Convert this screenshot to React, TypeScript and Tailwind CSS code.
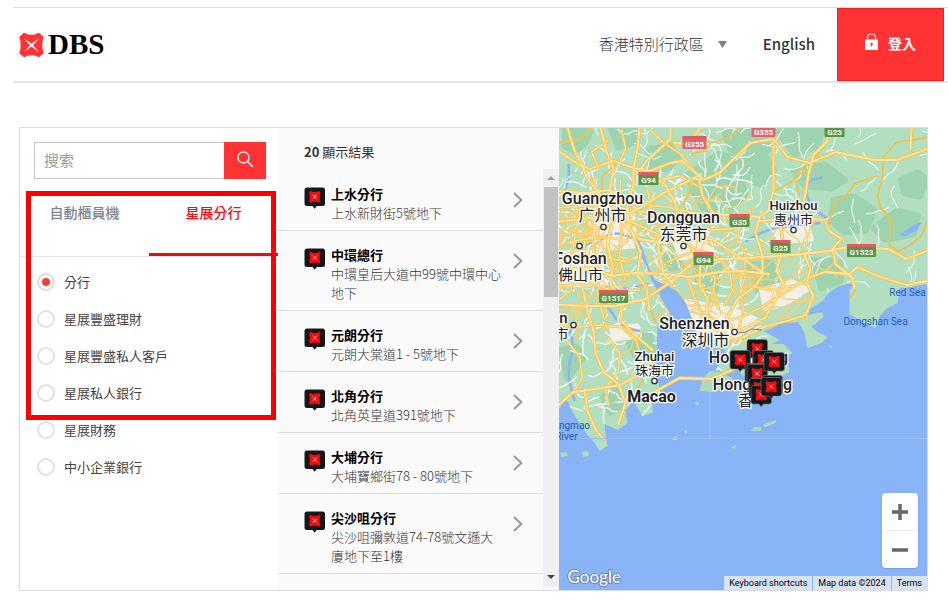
import { useState } from "react";

type Branch = { name: string; address: string };

const branches: Branch[] = [
  { name: "上水分行", address: "上水新財街5號地下" },
  { name: "中環總行", address: "中環皇后大道中99號中環中心地下" },
  { name: "元朗分行", address: "元朗大棠道1 - 5號地下" },
  { name: "北角分行", address: "北角英皇道391號地下" },
  { name: "大埔分行", address: "大埔寶鄉街78 - 80號地下" },
  { name: "尖沙咀分行", address: "尖沙咀彌敦道74-78號文遜大廈地下至1樓" },
];

const services = ["分行", "星展豐盛理財", "星展豐盛私人客戶", "星展私人銀行", "星展財務", "中小企業銀行"];

/* Brand */

function Spark({ className, color = "#ff3333" }: { className?: string; color?: string }) {
  return (
    <svg viewBox="0 0 26 26" className={className} aria-hidden="true">
      <path
        fill={color}
        d="M4.500 .8C6 .2 7 .8 8 1.500C10 2.600 16 2.600 18 1.500C19 .8 20 .2 21.500 .8C22.700 1.400 22.600 2.400 23.400 2.800C25.300 3.200 26 4.500 25.400 6C24.400 8 24.400 10 24.400 13C24.400 16 24.400 18 25.400 20C26 21.500 25.300 22.800 23.400 23.200C22.600 23.600 22.700 24.600 21.500 25.200C20 25.800 19 25.200 18 24.500C16 23.400 10 23.400 8 24.500C7 25.200 6 25.800 4.500 25.200C3.300 24.600 3.400 23.600 2.600 23.200C.7 22.800 0 21.500 .6 20C1.600 18 1.600 16 1.600 13C1.600 10 1.600 8 .6 6C0 4.500 .7 3.200 2.600 2.800C3.400 2.400 3.300 1.400 4.500 .8Z"
      />
      <path fill="#fff" d="M5 6L13 11.800L21 6L14.600 13.200L21 20.500L13 14.600L5 20.500L11.400 13.200Z" />
    </svg>
  );
}

function PinShape({ stroke = "none" }: { stroke?: string }) {
  return (
    <>
      <path
        d="M3 .5H18.500Q21 .5 21 3V16.500Q21 19 18.500 19H12.800L10.600 21.700L8.500 19H3Q.5 19 .5 16.500V3Q.5 .5 3 .5Z"
        fill="#15181b"
        stroke={stroke}
        strokeWidth="0.7"
      />
      <path
        d="M6.200 4.100Q7.200 3.600 8 4.400Q10.700 5.400 13.500 4.400Q14.400 3.600 15.400 4.200L16.500 5.500Q15.600 7.500 15.600 9.700Q15.600 12 16.500 13.900L15.400 15.300Q14.400 15.800 13.500 15Q10.700 14 8 15Q7.200 15.800 6.200 15.300L5 13.900Q5.900 12 5.900 9.700Q5.900 7.500 5 5.500Z"
        fill="#f8090e"
      />
      <path d="M8.800 7.700L12.800 11.700M12.800 7.700L8.800 11.700" stroke="#ffd9d9" strokeWidth="0.9" />
    </>
  );
}

/* Map */

const mainland =
  "M555 120H940V283L926 284L912 287L900 288L898 303L888 308L881 315L876 328L865 323L850 314L850 290L856 283L848 284L838 287L828 294L823 301L811 309L808 315L823 312L824 317L812 327L818 332L828 337L822 343L808 348L805 333L799 322L782 323L771 329L764 331L780 340L772 344L784 344L793 353L786 357L790 372L776 379L744 376L735 366L724 372L716 370L727 356L724 347L715 349L706 342L697 334L695 328L692 317L686 302L677 291L667 285L655 280L648 263L640 240L632 234L636 247L647 266L652 280L661 297L670 313L673 322L658 327L657 350L655 366L658 380L661 393L653 403L653 413L643 416L634 401L626 410L628 423L618 430L605 424L606 436L608 446L600 451L596 444L588 435L580 423L572 410L567 399L560 408L555 411Z";
const islands =
  "M700 391L703 379L710 371L720 372L733 378L728 387L714 392ZM738 381L760 380L781 383L779 396L765 399L748 393ZM763 425L770 422L777 420L776 423L766 427ZM751 431L755 427L762 427L761 431ZM582 452L588 451L590 455L584 457ZM561 453L567 452L568 456L562 457ZM685 431L688 430L687 434ZM674 437L677 436L678 440L673 440ZM732 447L737 445L735 449ZM695 403L699 402L699 406ZM828 345L832 346L833 349Z";

const hills = [
  "M566 130L590 132L587 141L576 151L566 146Z",
  "M612 129L637 130L635 142L619 147Z",
  "M650 150L670 146L678 158L668 169L651 166Z",
  "M689 175L720 154L735 160L746 195L728 212L704 208L694 192Z",
  "M726 133L760 132L770 148L752 166L737 166Z",
  "M741 156L766 157L774 170L761 184L745 177Z",
  "M779 132L822 129L818 146L795 154Z",
  "M795 171L825 165L845 180L832 188L806 186Z",
  "M835 200L855 197L874 210L866 230L845 232L832 220Z",
  "M902 180L918 173L927 180L920 196L905 193Z",
  "M875 228L898 211L918 216L914 234L885 239Z",
  "M750 265L772 263L779 285L759 291Z",
  "M815 260L840 262L841 280L822 288Z",
  "M696 265L720 262L716 289L700 287Z",
  "M562 350L577 347L583 358L568 378Z",
  "M626 337L650 336L654 354L637 357Z",
  "M604 398L617 385L624 404L611 412Z",
  "M660 246L675 250L682 266L672 268Z",
];

const urban = [
  "M590 218L632 216L634 246L600 249Z",
  "M559 253L598 252L606 283L559 285Z",
  "M674 239L705 238L714 254L682 258Z",
  "M773 225L806 222L812 239L781 242Z",
  "M612 328L638 326L640 336L614 339Z",
  "M686 301L735 310L758 320L735 338L705 336Z",
  "M762 290L793 282L808 289L789 302L766 309Z",
];

const rivers = [
  "M570 330Q576 345 571 359T575 400",
  "M596 290Q608 307 616 318T640 331",
  "M632 238Q615 229 604 238T578 244",
  "M747 241Q765 229 782 227T820 223",
  "M827 218Q809 207 807 193T822 178",
  "M569 165Q571 178 565 190",
  "M648 284Q632 290 613 289",
];

const highways = [
  "M559 151L580 165L590 169L614 161L634 168L650 171L671 163L683 161L704 180L720 173L734 159L751 143L774 139L788 157L810 163L836 152L875 160L898 160L927 149",
  "M568 128L575 151L583 165L587 177L604 199L613 220L608 244L613 267L611 284L622 301L622 321L634 334L653 350",
  "M601 128L607 151L614 169L610 190L619 211L634 223L658 234L659 249L664 274L673 283",
  "M640 128L638 150L634 168L634 185L628 206L629 225L641 252L638 276L647 288L650 310",
  "M671 128L671 139L647 161L642 168L665 184L675 201L680 219L687 240L701 262L700 285L708 298L707 324L733 339",
  "M559 222L590 218L615 221L640 208L664 193L693 179L701 174L700 182L703 196L714 214L748 216L760 217L769 210L774 190L774 145",
  "M760 217L756 233L763 256L763 275L756 286L738 299L727 318L735 333",
  "M559 270L592 268L612 276L635 273L667 274L690 277L720 272L742 271L769 274",
  "M559 305L590 306L616 306L646 299L670 283L693 263L722 259L749 258L779 256L803 254L829 251L848 247L889 249L907 259L927 251",
  "M829 128L828 141L814 155L809 174L806 194L800 217L783 219L760 221",
  "M798 218L825 220L830 231L842 239L833 249L836 264L853 278L855 288",
  "M559 405L574 392L589 390L621 385L640 374L653 361",
  "M585 242L584 266L583 288L588 311L594 331L596 353L604 372L619 384L626 403L619 424",
  "M604 199L617 216L640 239L664 243L680 240L713 239L729 250L748 262L764 273",
  "M700 128L690 144L674 143M912 128L911 149M780 221L783 239L781 256L777 271L784 284L774 303L765 318L740 331",
  "M655 392L680 378L712 379L737 368L757 355",
  "M805 255L811 269L807 282L814 296L806 315L791 320L767 326L744 337L735 341",
  "M809 278L825 272L850 274L858 267L881 277L907 285L927 281",
  "M559 191L587 193L610 190L631 202L638 210",
  "M585 389L588 411L597 431L604 439",
];

const arterials = [
  "M559 245L580 240L608 237L628 241M572 190L578 214L575 240L570 268L572 290L559 300",
  "M594 178L596 205L592 228L594 250L600 275L598 297L605 320",
  "M559 208L583 206L604 211L622 208L642 212L664 213M621 180L620 202L622 230L620 258L626 280",
  "M559 258L586 255L606 258L630 262M559 286L590 283L615 291L640 290",
  "M559 324L577 327L600 325L622 327L637 341L642 361L632 375",
  "M648 190L652 210L662 226L676 232L694 228L716 230L741 228",
  "M668 262L684 255L700 250L716 255L730 270L733 290L725 305",
  "M688 278L694 296L703 314L722 322L742 317L764 306L786 292L808 278",
  "M741 221L738 240L745 252L746 275L741 292L744 310L739 330",
  "M716 272L714 292L719 308M750 286L772 290L792 286L810 282",
  "M651 130L663 142L681 154L693 168M608 141L592 152L598 165M622 130L626 148L620 163",
  "M659 180L680 176L698 186M644 205L668 207L690 212L712 216",
  "M567 340L580 357L583 378L574 392M609 338L620 353L619 372L606 388L609 405",
  "M721 350L718 362L712 379M745 340L752 352L768 352",
];

const backroads = [
  "M559 143L581 139L592 128M618 163L603 176L602 190",
  "M740 128L729 138L711 143L706 151L692 154",
  "M927 138L897 142L884 157L883 178L878 195L881 208L891 218L890 245L897 250",
  "M878 176L856 183L846 196L836 202L831 216L829 228",
  "M774 192L792 182L802 169L820 153M800 195L795 177L808 170",
  "M897 252L908 247L922 236L927 222",
  "M850 314L849 300L856 289",
  "M693 179L690 192L684 203L688 219",
  "M643 299L650 307L656 322M650 366L636 393L626 416",
];

// Small seeded generator so the street web is the same on every render
function seeded(seed: number) {
  let s = seed;
  return () => {
    s = (s * 16807) % 2147483647;
    return s / 2147483647;
  };
}

function streets(seed: number, count: number, x0: number, y0: number, x1: number, y1: number, step: number) {
  const rand = seeded(seed);
  let d = "";
  for (let i = 0; i < count; i++) {
    let x = x0 + rand() * (x1 - x0);
    let y = y0 + rand() * (y1 - y0);
    let angle = Math.floor(rand() * 4) * (Math.PI / 2) + rand() * 0.6;
    d += `M${x.toFixed(1)} ${y.toFixed(1)}`;
    for (let j = 0; j < 4; j++) {
      angle += (rand() - 0.5) * 1.4;
      x += Math.cos(angle) * step;
      y += Math.sin(angle) * step;
      d += `L${x.toFixed(1)} ${y.toFixed(1)}`;
    }
  }
  return d;
}

const ruralLanes = streets(91, 120, 560, 128, 927, 290, 6);
const cityLanes = streets(417, 210, 560, 170, 750, 425, 5);
const cityStreets = streets(733, 95, 560, 190, 740, 330, 8);
const westStreets = streets(2051, 50, 560, 200, 650, 310, 7);
const eastStreets = streets(58, 36, 730, 220, 815, 320, 8);

const cities = [
  { x: 603, y: 204, size: 16, text: "Guangzhou" },
  { x: 603, y: 221, size: 16, text: "广州市" },
  { x: 684, y: 223, size: 16, text: "Dongguan" },
  { x: 684, y: 240, size: 16, text: "东莞市" },
  { x: 794, y: 210, size: 13, text: "Huizhou" },
  { x: 794, y: 224, size: 13, text: "惠州市" },
  { x: 581, y: 264, size: 16, text: "Foshan" },
  { x: 581, y: 280, size: 15, text: "佛山市" },
  { x: 564, y: 323, size: 15, text: "n" },
  { x: 562, y: 339, size: 14, text: "市" },
  { x: 695, y: 329, size: 16, text: "Shenzhen" },
  { x: 706, y: 346, size: 16, text: "深圳市" },
  { x: 655, y: 361, size: 13, text: "Zhuhai" },
  { x: 655, y: 375, size: 13, text: "珠海市" },
  { x: 749, y: 363, size: 16, text: "Hong Kong" },
  { x: 753, y: 390, size: 16, text: "Hong Kong" },
  { x: 746, y: 406, size: 15, text: "香" },
];

const dots = [[604, 227], [684, 246], [580, 246], [794, 230], [574, 325], [735, 332], [655, 381]];

const shields = [
  { x: 695, y: 143, text: "G355", red: true },
  { x: 764, y: 131, text: "G355", red: true },
  { x: 835, y: 131, text: "G25" },
  { x: 649, y: 179, text: "G94" },
  { x: 740, y: 221, text: "G35" },
  { x: 704, y: 259, text: "G94" },
  { x: 781, y: 247, text: "G25" },
  { x: 862, y: 251, text: "G1523" },
  { x: 614, y: 297, text: "G1517" },
];

const markers = [[747, 339], [753, 350], [730, 350], [745, 363], [747, 364], [749, 378], [762, 375], [764, 352], [751, 385], [761, 377]];

function BranchMap() {
  return (
    <svg
      viewBox="559 128 369 462"
      preserveAspectRatio="xMidYMid slice"
      className="absolute inset-0 h-full w-full"
      role="img"
      aria-label="分行地圖"
    >
      <defs>
        <clipPath id="land">
          <path d={mainland} />
        </clipPath>
      </defs>
      <rect x="0" y="0" width="2000" height="1200" fill="#8ab4f8" />
      <path d={mainland} fill="#b2dfbf" />
      <path d={islands} fill="#aedcba" />
      <g clipPath="url(#land)" fill="none" strokeLinejoin="round" strokeLinecap="round">
        <path d={hills.join("")} fill="#9dd4af" stroke="#9dd4af" strokeWidth="7" />
        <path d={urban.join("")} fill="#f3efe6" stroke="#f3efe6" strokeWidth="5" />
        <path d={rivers.join("")} stroke="#8ab4f8" strokeWidth="2.5" />
        <path d="M900 235L912 226L922 222L918 230L906 236Z" fill="#8ab4f8" />
        <path d={ruralLanes} stroke="#e8f5ea" strokeWidth="1.2" />
        <path d={cityLanes} stroke="#f5f8f3" strokeWidth="1.4" />
        <path d={cityStreets + westStreets + eastStreets} stroke="#fbcf6d" strokeWidth="1.3" />
        <path d={backroads.join("")} stroke="#f3c04f" strokeWidth="1.8" />
        <path d={arterials.join("")} stroke="#f7c451" strokeWidth="2.8" />
        <path d={arterials.join("")} stroke="#fde29a" strokeWidth="1.3" />
      </g>
      <g fill="none" strokeLinejoin="round" strokeLinecap="round">
        <path d={highways.join("")} stroke="#f7c451" strokeWidth="3.6" />
        <path d={highways.join("")} stroke="#fde6a4" strokeWidth="1.8" />
        <path d="M739 333L746 332L752 329L762 330" stroke="#6f7775" strokeWidth="1" />
      </g>
      <path d="M559 438.500H928M710.500 392V438" stroke="#9dbdf0" strokeWidth="1" />

      <g fontFamily="Roboto, 'Noto Sans CJK SC', sans-serif" textAnchor="middle">
        <g fill="#1c5fb8" fontSize="10">
          <text x="908" y="296">Red Sea</text>
          <text x="876" y="325">Dongshan Sea</text>
          <text x="575" y="429">ngmao</text>
          <text x="567" y="440">River</text>
        </g>
        {shields.map((s) => {
          const width = s.text.length * 5 + (s.text.length > 3 ? 4 : 5);
          return (
            <g key={`${s.text}-${s.x}`}>
              <rect x={s.x - width / 2} y={s.y - 6} width={width} height="12" rx="1" fill={s.red ? "#e4626b" : "#58963f"} />
              <rect x={s.x - width / 2} y={s.y - 7} width={width} height="3" fill="#dd5c60" />
              <text x={s.x} y={s.y + 4} fontSize="8" fontWeight="700" fill="#fff">
                {s.text}
              </text>
            </g>
          );
        })}
        <g fill="#202124" stroke="#fff" strokeWidth="2.5" strokeLinejoin="round" paintOrder="stroke">
          {cities.map((c) => (
            <text key={`${c.text}-${c.y}`} x={c.x} y={c.y} fontSize={c.size} fontWeight={/[a-z]/.test(c.text) ? 500 : 400}>
              {c.text}
            </text>
          ))}
          <text x="652" y="402" fontSize="16" fontWeight="700">
            Macao
          </text>
        </g>
      </g>
      {dots.map(([x, y]) => (
        <circle key={`${x}-${y}`} cx={x} cy={y} r="2.700" fill="#fff" stroke="#333" strokeWidth="1.300" />
      ))}
      {markers.map(([x, y]) => (
        <g key={`${x}-${y}`} transform={`translate(${x} ${y})`}>
          <PinShape stroke="#70757a" />
        </g>
      ))}
      <text
        x="568"
        y="583"
        fontFamily="Lato, sans-serif"
        fontSize="17"
        fontWeight="400"
        fill="#fff"
        stroke="#6885b5"
        strokeWidth="2"
        paintOrder="stroke"
      >
        Google
      </text>
    </svg>
  );
}

function MapPanel() {
  return (
    <section className="relative min-w-0 flex-1 overflow-hidden bg-[#8ab4f8]">
      <BranchMap />
      <div className="absolute right-[9px] bottom-[22px] flex w-9 flex-col items-center rounded-sm bg-white shadow">
        <button type="button" aria-label="放大" className="flex h-[37px] w-full items-center justify-center">
          <svg viewBox="0 0 18 18" className="h-[18px] w-[18px]">
            <path d="M9 1V17M1 9H17" stroke="#666" strokeWidth="3.500" />
          </svg>
        </button>
        <span className="h-px w-7 bg-[#e6e6e6]" />
        <button type="button" aria-label="縮小" className="flex h-[37px] w-full items-center justify-center">
          <svg viewBox="0 0 18 18" className="h-[18px] w-[18px]">
            <path d="M1 9H17" stroke="#666" strokeWidth="3.500" />
          </svg>
        </button>
      </div>
      <div className="absolute right-0 bottom-0 flex h-[14px] gap-px font-['Roboto',sans-serif] text-[9px] leading-[14px] whitespace-nowrap text-black">
        <button type="button" className="bg-[#d8e3f6] px-[5px]">Keyboard shortcuts</button>
        <span className="bg-[#d8e3f6] px-[5px]">Map data ©2024</span>
        <a href="#terms" className="bg-[#d8e3f6] px-[5px]">Terms</a>
      </div>
    </section>
  );
}

/* Page */

function Header() {
  return (
    <header className="mt-[7px] ml-[13px] flex h-[76px] items-stretch border-t border-b-2 border-t-[#dedede] border-b-[#e4e4e4] pr-1">
      <a href="#home" aria-label="DBS" className="ml-[6px] flex items-center gap-1">
        <Spark className="h-[26px] w-[25px]" />
        <span className="font-['Liberation_Serif',serif] text-[29px] leading-none font-bold text-black">DBS</span>
      </a>
      <nav className="ml-auto flex items-center">
        <button type="button" className="flex items-center gap-[14px] text-[15px] font-light text-[#333]">
          香港特別行政區
          <svg viewBox="0 0 9 7" className="h-[7px] w-[9px]">
            <path d="M0 0H9L4.500 7Z" fill="#808080" />
          </svg>
        </button>
        <a href="#en" className="ml-9 text-[15px] font-medium text-[#333]">
          English
        </a>
      </nav>
      <button
        type="button"
        className="ml-[22px] flex w-[107px] items-center justify-center gap-[10px] border border-[#fb1c1c] bg-[#ff3333] pb-[2px] text-[14px] font-bold text-white"
      >
        <svg viewBox="0 0 13 17" className="mb-1 h-[17px] w-[13px]">
          <path d="M2.500 8V4.800Q2.500 1 6.500 1T10.500 4.800V8" fill="none" stroke="#ffd6d6" strokeWidth="1.200" />
          <path d="M0 6.500H13V17H0Z" fill="#fff" />
          <path d="M5.500 10H7.700V11.500L6.800 13.500H6V12H5.500Z" fill="#f33" />
        </svg>
        登入
      </button>
    </header>
  );
}

function FilterPanel() {
  const [service, setService] = useState(services[0]);

  return (
    <section className="relative w-[258px] shrink-0 bg-white">
      <form className="mx-[14px] mt-[14px] mr-3 flex h-[37px]" onSubmit={(e) => e.preventDefault()}>
        <input
          type="text"
          aria-label="搜索"
          placeholder="搜索"
          className="min-w-0 flex-1 border border-r-0 border-[#c4c4c4] px-[9px] text-[15px] outline-none placeholder:text-[#999]"
        />
        <button type="submit" aria-label="搜索" className="flex w-[42px] items-center justify-center bg-[#ff3333] pb-[2px]">
          <svg viewBox="0 0 17 17" className="h-[17px] w-[17px]" fill="none" stroke="#fff" strokeWidth="1.300">
            <circle cx="6.500" cy="6.500" r="5.500" />
            <path d="M10.500 10.500L16 16" />
          </svg>
        </button>
      </form>

      <div role="tablist" className="mt-5 flex h-[58px] border-b border-[#e3e5e6] text-[14px] leading-[26px] font-medium">
        <button type="button" role="tab" aria-selected="false" className="flex flex-1 justify-center text-[#7b878f]">
          自動櫃員機
        </button>
        <button
          type="button"
          role="tab"
          aria-selected="true"
          className="flex flex-1 justify-center border-b-3 border-[#dc1111] text-[#fb0a12]"
        >
          星展分行
        </button>
      </div>

      <div role="radiogroup" aria-label="服務類別" className="mt-[6px] ml-[17px]">
        {services.map((s) => (
          <label key={s} className="flex h-[37px] items-center gap-[9px] text-[13px] text-[#444]">
            <input
              type="radio"
              name="service"
              checked={service === s}
              onChange={() => setService(s)}
              className="h-[18px] w-[18px] shrink-0 appearance-none rounded-full border-2 border-[#dde2e5] bg-white bg-clip-content p-[3px] checked:border-[#dcdcdc] checked:bg-[#ff3b3b]"
            />
            {s}
          </label>
        ))}
      </div>

      <div className="pointer-events-none absolute top-[63px] right-[2px] left-[6px] h-[229px] border-5 border-[#ff0000]" />
    </section>
  );
}

function ResultList() {
  return (
    <section className="flex w-[281px] shrink-0 flex-col overflow-hidden bg-[#fafafa]">
      <p className="h-[41px] shrink-0 pl-[26px] text-[13px] leading-[48px] text-[#333]">
        <b className="font-bold">20</b> 顯示結果
      </p>
      <div className="flex min-h-0 flex-1">
        <ul className="min-w-0 flex-1 overflow-hidden pt-px">
          {branches.map((b) => (
            <li key={b.name} className="border-b border-[#dcdcdc]">
              <a href="#branch" className="flex items-start pt-[14px] pr-5 pb-2 pl-[26px]">
                <svg viewBox="0 0 22 22" className="mt-[3px] h-[22px] w-[22px] shrink-0">
                  <PinShape />
                </svg>
                <span className="mr-[10px] ml-[5px] min-w-0 flex-1 text-[13px] leading-[19px]">
                  <b className="block font-bold text-black">{b.name}</b>
                  <span className="block font-light text-[#333]">{b.address}</span>
                </span>
                <svg viewBox="0 0 10 16" className="mt-2 h-4 w-[10px] shrink-0">
                  <path d="M1 1L8.300 8L1 15" fill="none" stroke="#8f989e" strokeWidth="1.900" />
                </svg>
              </a>
            </li>
          ))}
        </ul>
        <div className="mb-[3px] flex w-4 shrink-0 flex-col items-center bg-[#f0f0f0]">
          <svg viewBox="0 0 8 4" className="my-[7px] h-1 w-2 shrink-0">
            <path d="M0 4H8L4 0Z" fill="#a0a0a0" />
          </svg>
          <span className="h-[110px] w-[14px] bg-[#c1c1c1]" />
          <svg viewBox="0 0 8 4" className="mt-auto mb-2 h-1 w-2 shrink-0">
            <path d="M0 0H8L4 4Z" fill="#444" />
          </svg>
        </div>
      </div>
    </section>
  );
}

export default function App() {
  return (
    <div className="flow-root min-h-screen bg-white font-['Noto_Sans_CJK_TC',sans-serif]">
      <Header />
      <main className="mt-11 mr-5 mb-2 ml-[19px] flex h-[464px] border border-[#dcdcdc]">
        <FilterPanel />
        <ResultList />
        <MapPanel />
      </main>
    </div>
  );
}
